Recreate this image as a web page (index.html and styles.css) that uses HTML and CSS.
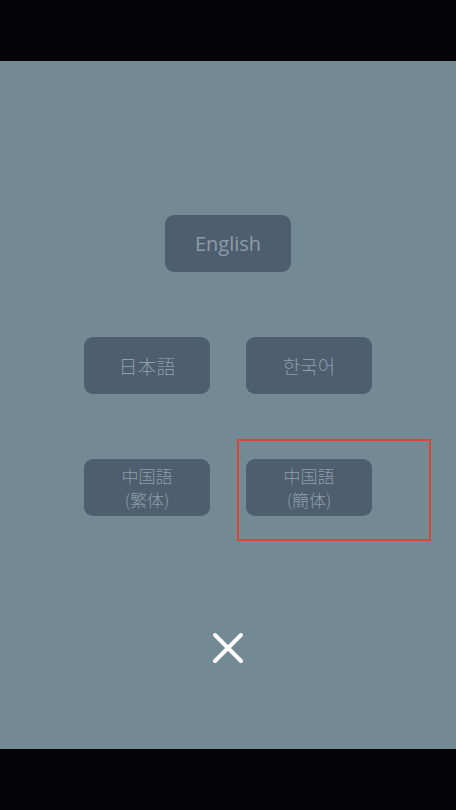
FILE: index.html
```html
<!DOCTYPE html>
<html lang="ja">
<head>
<meta charset="utf-8">
<title>Language</title>
<link rel="stylesheet" href="styles.css">
</head>
<body>
<div class="screen">
  <div class="bar"></div>
  <main class="panel">
    <div class="choices">
      <div class="row">
        <button class="lang latin">English</button>
      </div>
      <div class="row">
        <button class="lang">日本語</button>
        <button class="lang">한국어</button>
      </div>
      <div class="row">
        <button class="lang two"><span class="line">中国語</span><span class="line">(繁体)</span></button>
        <button class="lang two"><span class="line">中国語</span><span class="line">(簡体)</span></button>
      </div>
    </div>
    <button class="close" aria-label="閉じる">
      <svg width="32" height="32" viewBox="0 0 32 32"><path d="M3 3 L29 29 M29 3 L3 29" stroke="#ffffff" stroke-width="4" stroke-linecap="round" fill="none"/></svg>
    </button>
    <div class="highlight"></div>
  </main>
  <div class="bar"></div>
</div>
</body>
</html>
```
FILE: styles.css
```css
html, body {
  margin: 0;
  padding: 0;
  background: #040305;
}
.screen {
  width: 456px;
  height: 810px;
  display: flex;
  flex-direction: column;
}
.bar {
  height: 61px;
  background: #040305;
  flex: none;
}
.panel {
  position: relative;
  height: 688px;
  background: #738a95;
  display: flex;
  flex-direction: column;
  align-items: center;
  box-sizing: border-box;
  padding-top: 154px;
}
.choices {
  display: flex;
  flex-direction: column;
  gap: 65px;
  align-items: center;
}
.row {
  display: flex;
  gap: 36px;
  justify-content: center;
}
.lang {
  width: 126px;
  height: 57px;
  border: none;
  border-radius: 9px;
  background: #4d5e6e;
  color: #8d9caa;
  font-family: "Noto Sans CJK JP", "Noto Sans CJK KR", sans-serif;
  font-weight: 300;
  font-size: 19px;
  line-height: 23px;
  padding: 0;
  margin: 0;
}
.lang.latin {
  font-family: "Open Sans", "Noto Sans", sans-serif;
  font-weight: 400;
  font-size: 20px;
}
.lang.two {
  display: flex;
  flex-direction: column;
  align-items: center;
  justify-content: center;
  gap: 1px;
  font-size: 17px;
  line-height: 23px;
}
.line {
  display: block;
  height: 23px;
  overflow: hidden;
}
.close {
  margin-top: 116px;
  width: 32px;
  height: 32px;
  padding: 0;
  border: none;
  background: transparent;
  display: flex;
}
.highlight {
  position: absolute;
  left: 237px;
  top: 378px;
  width: 190px;
  height: 98px;
  border: 2px solid #dc4530;
}
```
